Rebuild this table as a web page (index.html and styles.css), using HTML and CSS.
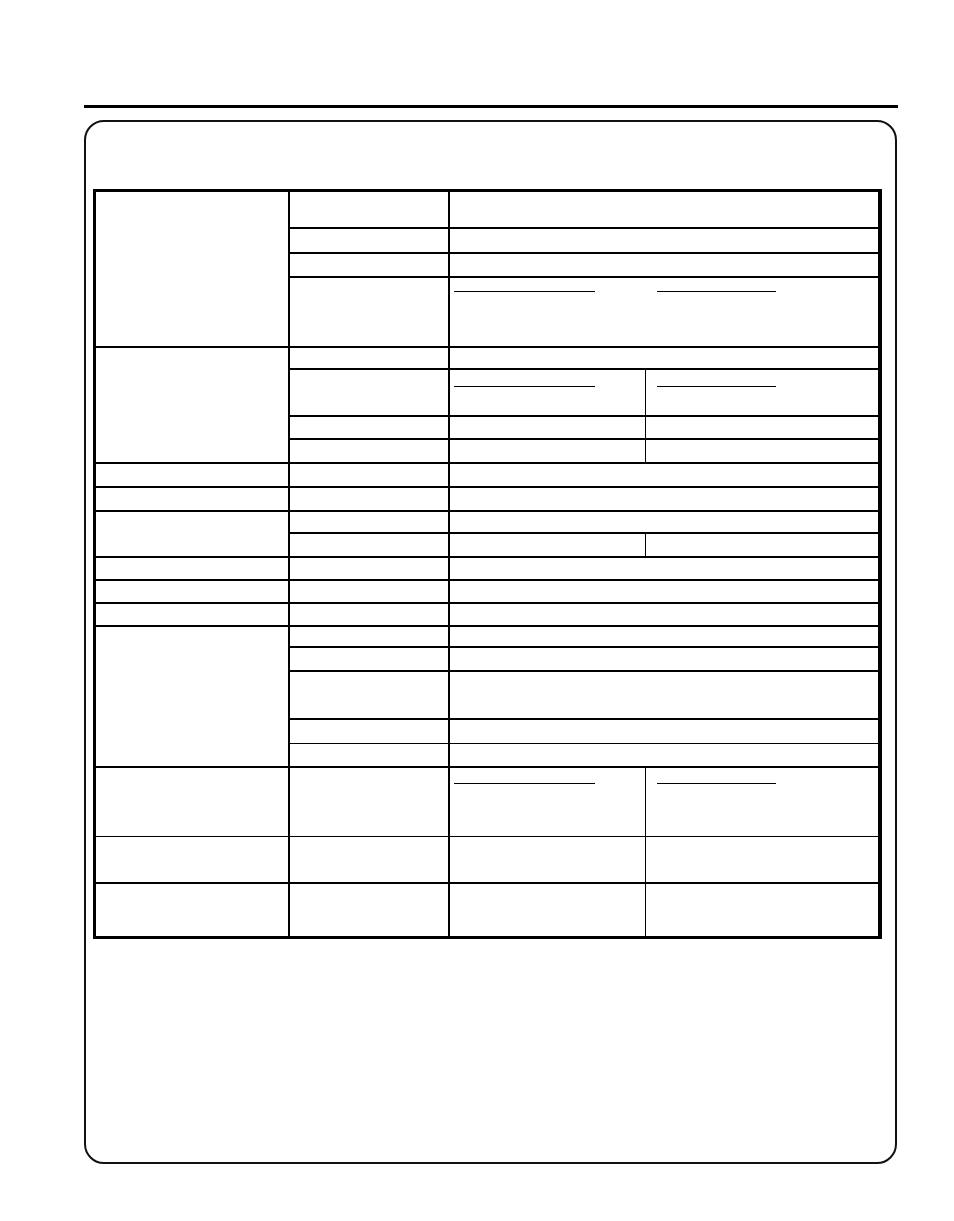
FILE: index.html
```html
<!DOCTYPE html>
<html>
<head>
<meta charset="utf-8">
<link rel="stylesheet" href="styles.css">
</head>
<body>
<div class="page">
  <div class="rule"></div>
  <div class="box">
    <div class="sheet">
      <!-- column 1 -->
      <div class="c c1" style="grid-row: 1 / 5"></div>
      <div class="c c1 t2" style="grid-row: 5 / 9"></div>
      <div class="c c1 t2" style="grid-row: 9"></div>
      <div class="c c1 t2" style="grid-row: 10"></div>
      <div class="c c1 t2" style="grid-row: 11 / 13"></div>
      <div class="c c1 t2" style="grid-row: 13"></div>
      <div class="c c1 t2" style="grid-row: 14"></div>
      <div class="c c1 t2" style="grid-row: 15"></div>
      <div class="c c1 t2" style="grid-row: 16 / 21"></div>
      <div class="c c1 t2" style="grid-row: 21"></div>
      <div class="c c1 t1" style="grid-row: 22"></div>
      <div class="c c1 t2" style="grid-row: 23"></div>

      <!-- column 2 -->
      <div class="c c2" style="grid-row: 1"></div>
      <div class="c c2 t2" style="grid-row: 2"></div>
      <div class="c c2 t2" style="grid-row: 3"></div>
      <div class="c c2 t2" style="grid-row: 4"></div>
      <div class="c c2 t2" style="grid-row: 5"></div>
      <div class="c c2 t2" style="grid-row: 6"></div>
      <div class="c c2 t2" style="grid-row: 7"></div>
      <div class="c c2 t2" style="grid-row: 8"></div>
      <div class="c c2 t2" style="grid-row: 9"></div>
      <div class="c c2 t2" style="grid-row: 10"></div>
      <div class="c c2 t2" style="grid-row: 11"></div>
      <div class="c c2 t2" style="grid-row: 12"></div>
      <div class="c c2 t2" style="grid-row: 13"></div>
      <div class="c c2 t2" style="grid-row: 14"></div>
      <div class="c c2 t2" style="grid-row: 15"></div>
      <div class="c c2 t2" style="grid-row: 16"></div>
      <div class="c c2 t2" style="grid-row: 17"></div>
      <div class="c c2 t2" style="grid-row: 18"></div>
      <div class="c c2 t2" style="grid-row: 19"></div>
      <div class="c c2 t1" style="grid-row: 20"></div>
      <div class="c c2 t2" style="grid-row: 21"></div>
      <div class="c c2 t1" style="grid-row: 22"></div>
      <div class="c c2 t2" style="grid-row: 23"></div>

      <!-- column 3 -->
      <div class="c c3" style="grid-row: 1"></div>
      <div class="c c3 t2" style="grid-row: 2"></div>
      <div class="c c3 t2" style="grid-row: 3"></div>
      <div class="c c3 t2 lines-wide" style="grid-row: 4">
        <span class="ul ul-a"></span><span class="ul ul-b"></span>
      </div>
      <div class="c c3 t2" style="grid-row: 5"></div>

      <div class="c c3a t2 lines-a" style="grid-row: 6"><span class="ul ul-a"></span></div>
      <div class="c c3b t2 lines-b" style="grid-row: 6"><span class="ul ul-b2"></span></div>
      <div class="c c3a t2" style="grid-row: 7"></div>
      <div class="c c3b t2" style="grid-row: 7"></div>
      <div class="c c3a t2" style="grid-row: 8"></div>
      <div class="c c3b t2" style="grid-row: 8"></div>

      <div class="c c3 t2" style="grid-row: 9"></div>
      <div class="c c3 t2" style="grid-row: 10"></div>
      <div class="c c3 t2" style="grid-row: 11"></div>

      <div class="c c3a t2" style="grid-row: 12"></div>
      <div class="c c3b t2" style="grid-row: 12"></div>

      <div class="c c3 t2" style="grid-row: 13"></div>
      <div class="c c3 t2" style="grid-row: 14"></div>
      <div class="c c3 t2" style="grid-row: 15"></div>
      <div class="c c3 t2" style="grid-row: 16"></div>
      <div class="c c3 t2" style="grid-row: 17"></div>
      <div class="c c3 t2" style="grid-row: 18"></div>
      <div class="c c3 t2" style="grid-row: 19"></div>
      <div class="c c3 t1" style="grid-row: 20"></div>

      <div class="c c3a t2 lines-c" style="grid-row: 21"><span class="ul ul-a"></span></div>
      <div class="c c3b t2 lines-d" style="grid-row: 21"><span class="ul ul-b2"></span></div>
      <div class="c c3a t1" style="grid-row: 22"></div>
      <div class="c c3b t1" style="grid-row: 22"></div>
      <div class="c c3a t2" style="grid-row: 23"></div>
      <div class="c c3b t2" style="grid-row: 23"></div>
    </div>
  </div>
</div>
</body>
</html>
```

FILE: styles.css
```css
html, body {
  margin: 0;
  padding: 0;
  background: #fff;
  font-family: "Liberation Sans", Arial, sans-serif;
}

.page {
  padding: 105px 0 0 84px;
  width: 814px;
}

.rule {
  height: 3px;
  width: 814px;
  background: #000;
}

.box {
  margin-top: 12px;
  width: 809px;
  height: 1040px;
  border: 2px solid #111;
  border-radius: 20px;
}

.sheet {
  margin: 67px 0 0 7px;
  width: 782px;
  border-top: 3px solid #000;
  border-left: 3px solid #000;
  border-right: 4px solid #000;
  border-bottom: 3px solid #000;
  display: grid;
  grid-template-columns: 192px 160px 197px 233px;
  grid-template-rows:
    35px 25px 24px 70px 22px 47px 23px 24px 24px 24px
    22px 24px 23px 23px 23px 21px 24px 48px 25px 23px
    70px 46px 54px;
}

.c {
  box-sizing: border-box;
  min-width: 0;
  min-height: 0;
}

.c1 { grid-column: 1; }
.c2 { grid-column: 2; border-left: 2px solid #000; }
.c3 { grid-column: 3 / 5; border-left: 2px solid #000; }
.c3a { grid-column: 3; border-left: 2px solid #000; }
.c3b { grid-column: 4; border-left: 1px solid #000; }

.t2 { border-top: 2px solid #000; }
.t1 { border-top: 1px solid #000; }

.ul {
  display: block;
  height: 0;
  border-top: 1px solid #000;
}

.ul-a { width: 141px; }
.ul-b { width: 119px; margin-left: 62px; }
.ul-b2 { width: 119px; margin-left: 11px; }

.lines-wide {
  display: flex;
  align-items: flex-start;
  padding: 13px 0 0 4px;
}

.lines-a { padding: 16px 0 0 4px; }
.lines-b { padding-top: 16px; }
.lines-c { padding: 15px 0 0 4px; }
.lines-d { padding-top: 15px; }
```
